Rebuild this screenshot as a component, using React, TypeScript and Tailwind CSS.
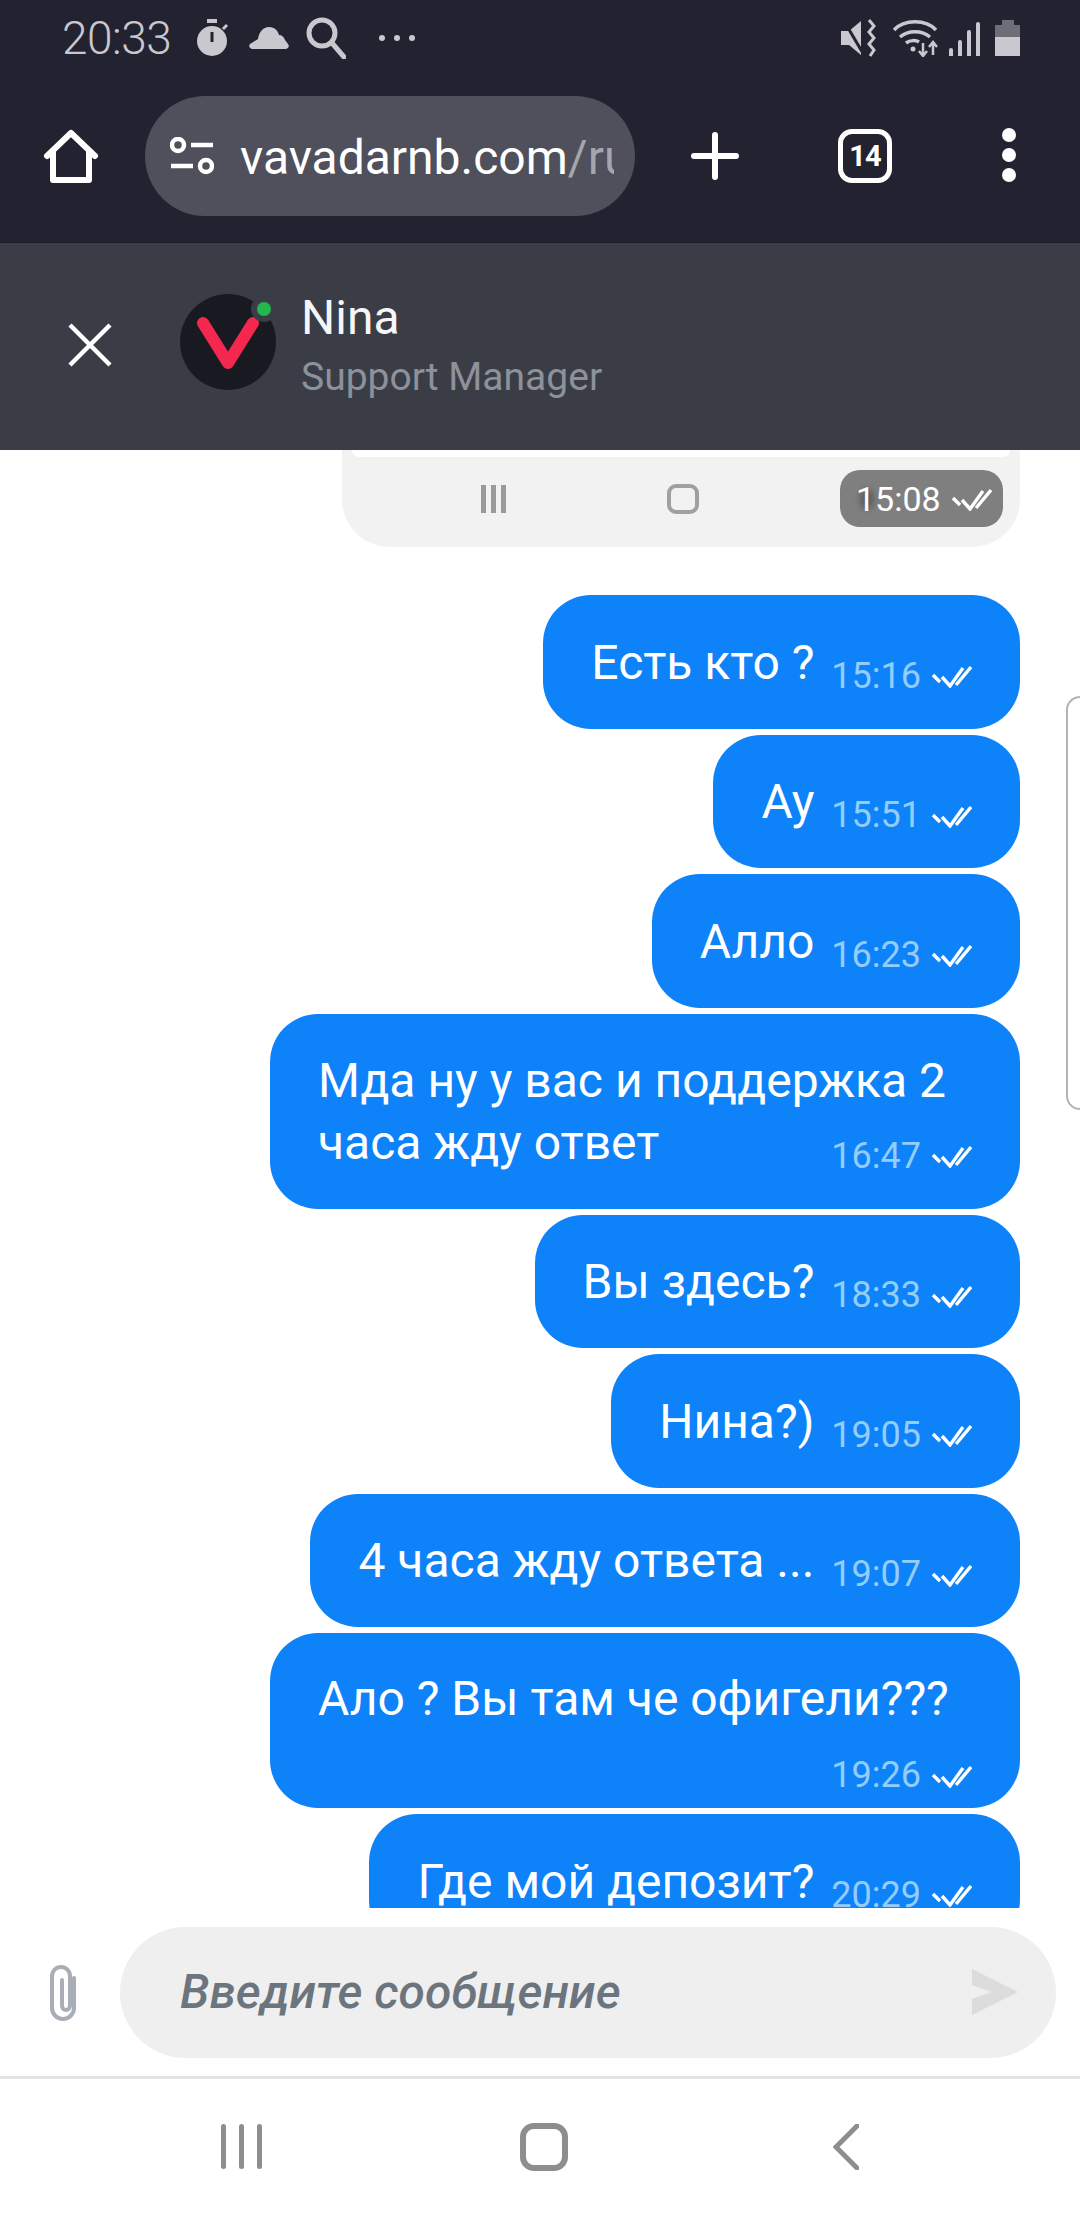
const ROBOTO = "font-['Roboto',sans-serif]";

function DoubleCheck({ className }: { className?: string }) {
  return (
    <svg viewBox="0 0 40 25" className={className} fill="none" stroke="currentColor" strokeWidth="3.4">
      <path d="M1 12l7 7" />
      <path d="M10 14l8 9L31 5" />
      <path d="M24 22L39 4" />
    </svg>
  );
}

function StatusBar() {
  return (
    <div className="h-[76px] flex items-center pl-[62px] pr-[60px] text-[#c8c8ce]">
      <span className="text-[46px] font-light leading-none tracking-[-0.5px] w-[111px]">20:33</span>
      <svg viewBox="0 0 34 38" className="w-[34px] h-[38px] ml-[24px]" fill="currentColor">
        <rect x="10" y="0" width="10" height="4" />
        <circle cx="15" cy="22" r="15" />
        <rect x="13.5" y="13" width="3" height="10" fill="#222230" />
        <path d="M26 10l4-4" stroke="currentColor" strokeWidth="3" />
      </svg>
      <svg viewBox="0 0 40 22" className="w-[40px] h-[22px] ml-[18px]" fill="currentColor">
        <path d="M3 22a3 3 0 0 1-2-5l8-5C10 5 14 0 20 0s9 4 10 8c3 0 5 2 6 5l3 4a3 3 0 0 1-2 5z" />
      </svg>
      <svg viewBox="0 0 40 42" className="w-[40px] h-[42px] ml-[17px]" fill="none" stroke="currentColor" strokeWidth="5">
        <circle cx="16" cy="16" r="13" />
        <path d="M26 26l12 14" strokeLinecap="round" />
      </svg>
      <div className="flex gap-[9px] ml-[33px]">
        <span className="w-[6px] h-[6px] rounded-full bg-[#c8c8ce]" />
        <span className="w-[6px] h-[6px] rounded-full bg-[#c8c8ce]" />
        <span className="w-[6px] h-[6px] rounded-full bg-[#c8c8ce]" />
      </div>
      <div className="flex-1" />
      <svg viewBox="0 0 38 38" className="w-[38px] h-[38px]" fill="currentColor">
        <path d="M0 12h8L20 2v34L8 26H0z" />
        <path d="M3 2l20 34" stroke="#222230" strokeWidth="3" />
        <path d="M28 1l5 6-5 6 5 6-5 6 5 6-4 6" fill="none" stroke="currentColor" strokeWidth="3" />
      </svg>
      <svg viewBox="0 0 46 38" className="w-[46px] h-[38px] ml-[14px]" fill="none" stroke="currentColor" strokeWidth="3.5">
        <path d="M1 11C11 0 33 0 43 11" />
        <path d="M7 18c8-7 22-7 30 0" />
        <path d="M13 24c4-3 10-3 13-1" />
        <circle cx="20" cy="30" r="2.5" fill="currentColor" stroke="none" />
        <path d="M30 24v12M26 32l4 5 4-5" strokeWidth="2.5" />
        <path d="M40 36V24M36 28l4-5 4 5" strokeWidth="2.5" />
      </svg>
      <div className="flex items-end gap-[5px] ml-[10px] h-[36px]">
        <span className="w-[4px] h-[8px] rounded-t-sm bg-[#c8c8ce]" />
        <span className="w-[4px] h-[16px] rounded-t-sm bg-[#c8c8ce]" />
        <span className="w-[4px] h-[26px] rounded-t-sm bg-[#c8c8ce]" />
        <span className="w-[4px] h-[34px] rounded-t-sm bg-[#c8c8ce]" />
      </div>
      <div className="flex flex-col items-center ml-[15px]">
        <span className="w-[12px] h-[5px] bg-[#6e6e78]" />
        <div className="w-[25px] h-[31px] flex flex-col bg-[#6e6e78]">
          <div className="h-[12px]" />
          <div className="flex-1 bg-[#c8c8ce]" />
        </div>
      </div>
    </div>
  );
}

function Toolbar() {
  return (
    <div className="h-[166px] flex items-start pt-[20px]">
      <svg viewBox="0 0 56 56" className="w-[56px] h-[56px] ml-[43px] mt-[33px]" fill="none" stroke="#fff" strokeWidth="6" strokeLinejoin="round" strokeLinecap="round">
        <path d="M4 27L28 4l24 23" />
        <path d="M10 23v28h36V23" />
      </svg>
      <div className="w-[490px] h-[120px] ml-[46px] rounded-full bg-[#50505c] flex items-center pl-[25px] pr-[21px]">
        <svg viewBox="0 0 44 38" className="w-[44px] h-[38px] shrink-0" fill="none" stroke="#fff" strokeWidth="4.5">
          <circle cx="8" cy="8" r="6" />
          <path d="M21 8h22" />
          <path d="M1 29h22" />
          <circle cx="36" cy="29" r="6" />
        </svg>
        <span className="ml-[26px] mt-[4px] text-[48px] leading-[60px] whitespace-nowrap overflow-hidden text-white w-[374px] font-normal">
          vavadarnb.com<span className="text-[#a5a5ae]">/ru</span>
        </span>
      </div>
      <svg viewBox="0 0 48 48" className="w-[48px] h-[48px] ml-[56px] mt-[36px]" stroke="#fff" strokeWidth="6" strokeLinecap="round">
        <path d="M24 3v42M3 24h42" />
      </svg>
      <div className="w-[54px] h-[54px] ml-[99px] mt-[33px] rounded-[14px] border-[5px] border-white flex items-center justify-center text-white text-[29px] tracking-[-1px] font-bold leading-none">
        14
      </div>
      <div className="flex flex-col gap-[6px] ml-[110px] mt-[32px]">
        <span className="w-[14px] h-[14px] rounded-full bg-white" />
        <span className="w-[14px] h-[14px] rounded-full bg-white" />
        <span className="w-[14px] h-[14px] rounded-full bg-white" />
      </div>
    </div>
  );
}

function ChatHeader() {
  return (
    <div className="h-[208px] bg-[#3a3d46] border-t-[1px] border-[#1d1d28] flex items-center">
      <svg viewBox="0 0 44 44" className="w-[44px] h-[44px] ml-[68px] mb-[4px]" stroke="#fff" strokeWidth="4.5">
        <path d="M2 2l40 40M42 2L2 42" />
      </svg>
      <div className="relative w-[96px] h-[96px] ml-[68px] mb-[10px] rounded-full bg-[#191a21] flex items-center justify-center">
        <svg viewBox="0 0 64 64" className="w-[64px] h-[64px]" fill="none" stroke="#f4284f" strokeWidth="12" strokeLinecap="round" strokeLinejoin="round">
          <path d="M7 13l25 40L57 13" />
        </svg>
        <span className="absolute top-[2px] right-[-1px] w-[26px] h-[26px] rounded-full bg-[#3a3d46] flex items-center justify-center">
          <span className="w-[14px] h-[14px] rounded-full bg-[#22b84c]" />
        </span>
      </div>
      <div className="ml-[25px] mt-[-2px] flex flex-col">
        <span className="text-[48px] leading-[56px] text-[#f4f6f8]">Nina</span>
        <span className="text-[39px] leading-[48px] mt-[7px] text-[#8d9199]">Support Manager</span>
      </div>
    </div>
  );
}

function ImageCard() {
  return (
    <div className="self-end w-[678px] h-[97px] bg-[#f2f2f2] rounded-b-[48px] shrink-0 overflow-hidden">
      <div className="h-[7px] mx-[10px] bg-white rounded-b-[24px]" />
      <div className="flex items-center h-[90px]">
        <div className="flex gap-[5px] ml-[139px] mt-[-6px] blur-[0.6px]">
          <span className="w-[5px] h-[28px] bg-[#9a9a9a]" />
          <span className="w-[5px] h-[28px] bg-[#9a9a9a]" />
          <span className="w-[5px] h-[28px] bg-[#9a9a9a]" />
        </div>
        <div className="w-[32px] h-[30px] ml-[161px] mt-[-6px] rounded-[9px] border-[4px] border-[#a0a0a0] blur-[0.6px]" />
        <div className="relative ml-[141px] mt-[-7px] w-[163px] h-[57px] rounded-[20px] bg-[#7f7f7f] flex items-center pl-[16px] text-white">
          <span className="absolute left-[20px] top-[19px] w-[14px] h-[20px] rounded-full bg-[#5f5f5f] blur-[3px]" />
          <span className="relative text-[34px] leading-none">15:08</span>
          <DoubleCheck className="relative w-[40px] h-[25px] ml-[11px] text-white" />
        </div>
      </div>
    </div>
  );
}

interface Message {
  text: string;
  time: string;
  shape?: 'inline' | 'wrap' | 'stack';
}

const messages: Message[] = [
  { text: 'Есть кто ?', time: '15:16' },
  { text: 'Ау', time: '15:51' },
  { text: 'Алло', time: '16:23' },
  { text: 'Мда ну у вас и поддержка 2 часа жду ответ', time: '16:47', shape: 'wrap' },
  { text: 'Вы здесь?', time: '18:33' },
  { text: 'Нина?)', time: '19:05' },
  { text: '4 часа жду ответа ...', time: '19:07' },
  { text: 'Ало ? Вы там че офигели???', time: '19:26', shape: 'stack' },
  { text: 'Где мой депозит?', time: '20:29' },
];

function Stamp({ time }: { time: string }) {
  return (
    <span className="flex items-center text-[#93cdfb] text-[36px] leading-none whitespace-nowrap">
      {time}
      <DoubleCheck className="w-[40px] h-[25px] ml-[11px] text-white" />
    </span>
  );
}

function Bubble({ msg }: { msg: Message }) {
  if (msg.shape === 'wrap') {
    return (
      <div className="self-end w-[750px] h-[195px] shrink-0 rounded-[48px] bg-[#0d82f9] px-[48px] pt-[36px] text-white">
        <p className="text-[48px] leading-[62px]">{msg.text}</p>
        <div className="flex justify-end mt-[-36px]">
          <Stamp time={msg.time} />
        </div>
      </div>
    );
  }
  if (msg.shape === 'stack') {
    return (
      <div className="self-end w-[750px] h-[175px] shrink-0 rounded-[48px] bg-[#0d82f9] px-[48px] pt-[35px] text-white">
        <p className="text-[48px] leading-[62px] whitespace-nowrap">{msg.text}</p>
        <div className="flex justify-end mt-[27px]">
          <Stamp time={msg.time} />
        </div>
      </div>
    );
  }
  return (
    <div className="self-end h-[133.5px] shrink-0 rounded-[48px] bg-[#0d82f9] px-[48px] flex items-center text-white">
      <span className="text-[48px] leading-[62px] whitespace-nowrap mt-[2px]">{msg.text}</span>
      <span className="ml-[17px] mt-[28px]">
        <Stamp time={msg.time} />
      </span>
    </div>
  );
}

function InputBar() {
  return (
    <div className="h-[171px] shrink-0 flex items-center border-b-[3px] border-[#e3e3e3]">
      <svg viewBox="0 0 36 62" className="w-[36px] h-[62px] ml-[46px] mt-[6px]" fill="none" stroke="#a9aeb6" strokeWidth="4">
        <path d="M28 14v30a11 11 0 0 1-22 0V12a9 9 0 0 1 18 0v30a4 4 0 0 1-8 0V16" strokeLinecap="round" />
      </svg>
      <div className="w-[936px] h-[131px] ml-[38px] rounded-full bg-[#efefef] flex items-center pl-[60px] pr-[38px]">
        <span className="flex-1 text-[#6c757d] text-[48px] italic font-medium">Введите сообщение</span>
        <svg viewBox="0 0 46 46" className="w-[46px] h-[46px]" fill="#dcdcdc">
          <path d="M0 0l46 23L0 46V30l20-7L0 16z" />
        </svg>
      </div>
    </div>
  );
}

function NavBar() {
  return (
    <div className="flex-1 flex items-center">
      <div className="flex gap-[13px] ml-[221px] mt-[-6px]">
        <span className="w-[5px] h-[45px] rounded-full bg-[#8e8e8e]" />
        <span className="w-[5px] h-[45px] rounded-full bg-[#8e8e8e]" />
        <span className="w-[5px] h-[45px] rounded-full bg-[#8e8e8e]" />
      </div>
      <div className="w-[48px] h-[48px] ml-[258px] mt-[-6px] rounded-[14px] border-[6px] border-[#8e8e8e]" />
      <svg viewBox="0 0 26 46" className="w-[26px] h-[46px] ml-[265px] mt-[-6px]" fill="none" stroke="#8e8e8e" strokeWidth="5" strokeLinecap="round">
        <path d="M24 2L3 23l21 21" />
      </svg>
    </div>
  );
}

export default function App() {
  return (
    <div className={`w-[1080px] h-[2220px] flex flex-col bg-white overflow-hidden ${ROBOTO}`}>
      <div className="h-[242px] shrink-0 bg-[#222230]">
        <StatusBar />
        <Toolbar />
      </div>
      <ChatHeader />
      <div className="relative h-[1458px] shrink-0 overflow-hidden flex flex-col gap-[6px] pr-[60px]">
        <ImageCard />
        <div className="h-[36px] shrink-0" />
        {messages.map((m) => (
          <Bubble key={m.time} msg={m} />
        ))}
        <div className="absolute right-0 top-[246px] w-[14px] h-[414px] rounded-l-[16px] border-2 border-r-0 border-[#b4b4b4]" />
      </div>
      <InputBar />
      <NavBar />
    </div>
  );
}
